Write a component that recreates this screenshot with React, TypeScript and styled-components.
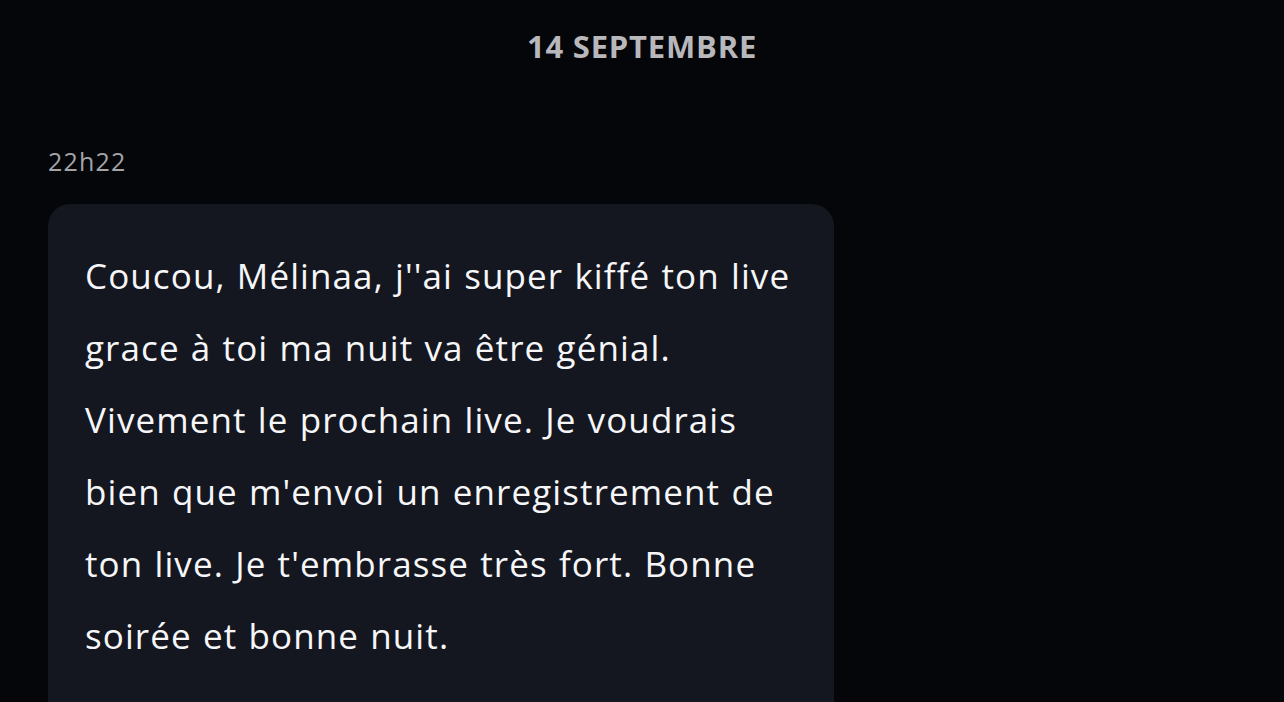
import React from "react";
import styled, { createGlobalStyle } from "styled-components";

const Global = createGlobalStyle`
  html, body { margin: 0; padding: 0; background: #05060a; }
  body { font-family: "Open Sans", "DejaVu Sans", sans-serif; }
`;

const Page = styled.div`
  width: 1284px;
  height: 702px;
  overflow: hidden;
  background: #05060a;
  display: flex;
  flex-direction: column;
  padding: 0 48px;
  box-sizing: border-box;
`;

const DateHeader = styled.div`
  text-align: center;
  color: #b8b8bc;
  font-family: "Open Sans", sans-serif;
  font-weight: 700;
  font-size: 31px;
  line-height: 40px;
  margin-top: 26px;
  letter-spacing: 0.8px;
`;

const Time = styled.div`
  color: #a4a4a8;
  font-family: "Open Sans", sans-serif;
  font-size: 25px;
  line-height: 32px;
  margin-top: 79px;
  letter-spacing: 1.2px;
`;

const Bubble = styled.div`
  margin-top: 27px;
  width: 786px;
  flex-shrink: 0;
  box-sizing: border-box;
  background: #141720;
  border-radius: 22px;
  padding: 36px 30px 60px 37px;
  color: #f6f6f8;
  font-family: "Open Sans", sans-serif;
  font-size: 35px;
  line-height: 72px;
  letter-spacing: 1.1px;
  word-spacing: 1px;
`;

const Line = styled.span`
  display: block;
  white-space: nowrap;
`;

const lines = [
  "Coucou, Mélinaa, j''ai super kiffé ton live",
  "grace à toi ma nuit va être génial.",
  "Vivement le prochain live. Je voudrais",
  "bien que m'envoi un enregistrement de",
  "ton live. Je t'embrasse très fort. Bonne",
  "soirée et bonne nuit.",
];

export default function App() {
  return (
    <>
      <Global />
      <Page>
        <DateHeader>14 SEPTEMBRE</DateHeader>
        <Time>22h22</Time>
        <Bubble>
          {lines.map((l, i) => (
            <Line key={i}>{l}</Line>
          ))}
        </Bubble>
      </Page>
    </>
  );
}
